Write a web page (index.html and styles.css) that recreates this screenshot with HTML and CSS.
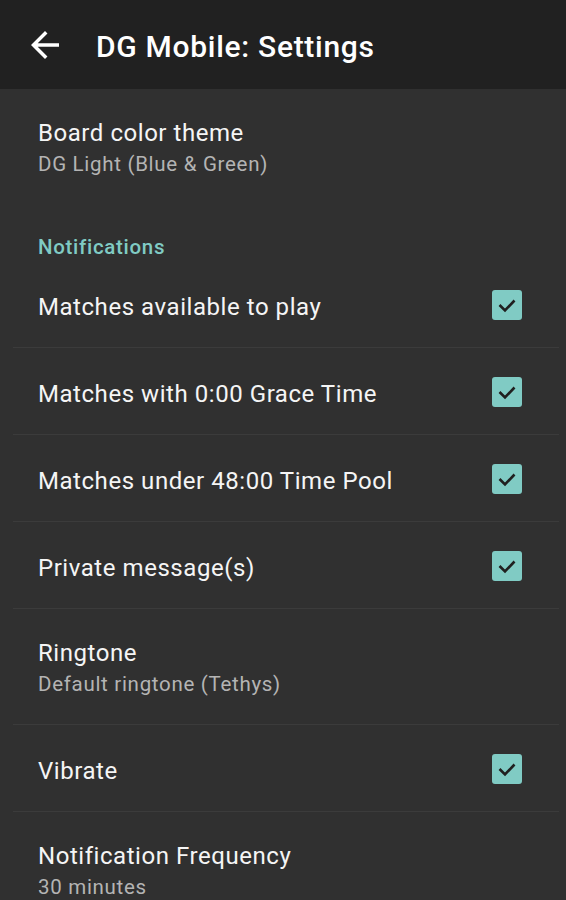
FILE: index.html
```html
<!DOCTYPE html>
<html lang="en">
<head>
    <meta charset="UTF-8">
    <meta name="viewport" content="width=device-width, initial-scale=1.0">
    <title>DG Mobile: Settings</title>
    <link rel="stylesheet" href="styles.css">
</head>
<body>
    <header class="toolbar">
        <button class="back" aria-label="Back">
            <svg viewBox="0 0 24 24" width="42" height="42">
                <path d="M20 11H7.83l5.59-5.59L12 4l-8 8 8 8 1.41-1.41L7.83 13H20v-2z" fill="#fff"/>
            </svg>
        </button>
        <h1>DG Mobile: Settings</h1>
    </header>

    <main class="prefs">
        <div class="pref two-line">
            <div class="pref-text">
                <div class="pref-title">Board color theme</div>
                <div class="pref-summary">DG Light (Blue &amp; Green)</div>
            </div>
        </div>

        <div class="category">Notifications</div>

        <div class="pref">
            <div class="pref-text">
                <div class="pref-title">Matches available to play</div>
            </div>
            <span class="checkbox"></span>
        </div>
        <div class="pref">
            <div class="pref-text">
                <div class="pref-title">Matches with 0:00 Grace Time</div>
            </div>
            <span class="checkbox"></span>
        </div>
        <div class="pref">
            <div class="pref-text">
                <div class="pref-title">Matches under 48:00 Time Pool</div>
            </div>
            <span class="checkbox"></span>
        </div>
        <div class="pref">
            <div class="pref-text">
                <div class="pref-title">Private message(s)</div>
            </div>
            <span class="checkbox"></span>
        </div>
        <div class="pref two-line">
            <div class="pref-text">
                <div class="pref-title">Ringtone</div>
                <div class="pref-summary">Default ringtone (Tethys)</div>
            </div>
        </div>
        <div class="pref">
            <div class="pref-text">
                <div class="pref-title">Vibrate</div>
            </div>
            <span class="checkbox"></span>
        </div>
        <div class="pref two-line">
            <div class="pref-text">
                <div class="pref-title">Notification Frequency</div>
                <div class="pref-summary">30 minutes</div>
            </div>
        </div>
    </main>
</body>
</html>
```

FILE: styles.css
```css
body {
    margin: 0;
    font-family: 'Roboto', 'Noto Sans', sans-serif;
    background: #303030;
    color: #fff;
    height: 900px;
    overflow: hidden;
}

/* Toolbar */
.toolbar {
    display: flex;
    align-items: center;
    height: 86px;
    padding-top: 3px;
    background: #212121;
}

.back {
    display: flex;
    align-items: center;
    justify-content: center;
    width: 42px;
    height: 42px;
    margin-left: 24px;
    margin-top: -3px;
    padding: 0;
    background: none;
    border: none;
}

h1 {
    margin: 0 0 0 30px;
    font-size: 30px;
    letter-spacing: 0.7px;
    font-weight: 500;
    color: #fff;
}

/* Preference list */
.pref {
    display: flex;
    align-items: center;
    height: 80px;
    padding: 6px 37px 0 25px;
    margin: 0 7px 0 13px;
    border-bottom: 1px solid #3b3b3b;
}

.pref.two-line {
    height: 115px;
    padding-top: 0;
    align-items: flex-start;
}

.pref.two-line .pref-text {
    padding-top: 29px;
}

.pref:first-child,
.pref:last-child {
    border-bottom: none;
}

.pref-text {
    flex: 1;
}

.pref-title {
    font-size: 24px;
    letter-spacing: 0.55px;
    line-height: 30px;
    color: #f5f5f5;
}

.pref-summary {
    font-size: 20.5px;
    letter-spacing: 0.7px;
    line-height: 26px;
    margin-top: 3px;
    color: #b4b4b4;
}

.category {
    padding: 30px 0 1px 38px;
    height: 26px;
    line-height: 26px;
    font-size: 20.5px;
    letter-spacing: 0.7px;
    font-weight: 500;
    color: #80cbc4;
}

.checkbox {
    width: 30px;
    height: 30px;
    margin-top: -5px;
    border-radius: 3px;
    background: #80cbc4 url("data:image/svg+xml,%3Csvg xmlns='http://www.w3.org/2000/svg' viewBox='0 0 30 30'%3E%3Cpath d='M7.5 15l5.5 5.5 9.5-10' fill='none' stroke='%23202020' stroke-width='2.6'/%3E%3C/svg%3E") center / 30px 30px no-repeat;
}
```
